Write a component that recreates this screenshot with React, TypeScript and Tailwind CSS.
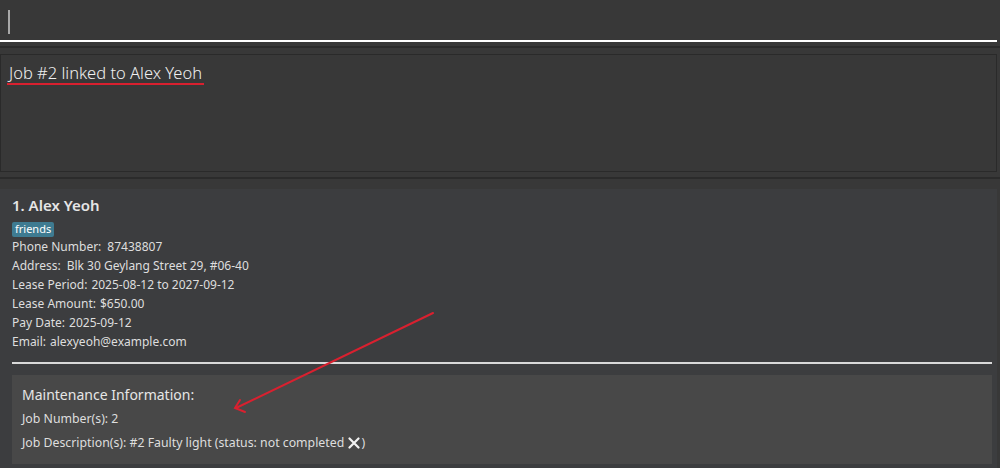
import React from "react";

const font = { fontFamily: '"Noto Sans", "Open Sans", sans-serif' };

function Row({ label, value, gap }: { label: string; value: string; gap?: boolean }) {
  return (
    <div className="flex h-[19px] items-center text-[12px] text-[#dedede]">
      <span>{label}</span>
      <span className={gap ? "ml-[6px]" : "ml-[4px]"}>{value}</span>
    </div>
  );
}

export default function App() {
  return (
    <div className="relative h-[468px] w-[1000px] overflow-hidden bg-[#383838]" style={font}>
      {/* command box */}
      <div className="mr-[3px] flex h-[42px] items-start border-b-2 border-white pl-[8px] pt-[10px]">
        <div className="h-[24px] w-[2px] bg-[#a8a8a8]" />
      </div>
      <div className="mt-[4px] h-[2px] bg-[#2b2b2b]" />

      {/* result display */}
      <div className="mr-[3px] mt-[6px] h-[118px] border border-[#2a2a2a] bg-[#383838] pl-[6px] pt-[6px]">
        <div className="inline-block border-b-2 border-[#d9202f] px-[2px] text-[16.5px] font-light leading-[20px] text-[#f0f0f0]">
          Job #2 linked to Alex Yeoh
        </div>
      </div>
      <div className="mt-[5px] h-[2px] bg-[#2b2b2b]" />

      {/* person list */}
      <div className="mr-[3px] mt-[10px] h-[300px] bg-[#3c3d3f] px-[12px] pt-[6px]">
        <div className="text-[15px] font-semibold leading-[20px] text-[#e6e6e6]">1. Alex Yeoh</div>
        <div className="mt-[4px] inline-flex h-[15px] items-center rounded-[2px] bg-[#3e7b91] px-[3px] text-[11px] text-white">
          friends
        </div>
        <div className="-mt-[2px]">
          <Row label="Phone Number:" value="87438807" gap />
          <Row label="Address:" value="Blk 30 Geylang Street 29, #06-40" gap />
          <Row label="Lease Period:" value="2025-08-12 to 2027-09-12" />
          <Row label="Lease Amount:" value="$650.00" />
          <Row label="Pay Date:" value="2025-09-12" />
          <Row label="Email:" value="alexyeoh@example.com" />
        </div>
        <div className="mr-[-7px] mt-[11px] h-[2px] bg-[#d9d9d9]" />
        <div className="mr-[-7px] mt-[11px] h-[89px] bg-[#484848] px-[10px] pt-[10px]">
          <div className="text-[14px] leading-[20px] text-[#e6e6e6]">Maintenance Information:</div>
          <div className="mt-[5px] text-[12.3px] leading-[18px] text-[#dedede]">Job Number(s): 2</div>
          <div className="mt-[6px] flex items-center text-[12.3px] leading-[18px] text-[#dedede]">
            <span>Job Description(s): #2 Faulty light (status: not completed&nbsp;</span>
            <svg width="12" height="12" viewBox="0 0 12 12" className="mx-[1px]">
              <path d="M1.5 1.5 L10.5 10.5 M10.5 1.5 L1.5 10.5" stroke="#f2f2f2" strokeWidth="2.2" strokeLinecap="round" />
            </svg>
            <span>)</span>
          </div>
        </div>
      </div>

      {/* annotation arrow */}
      <svg className="pointer-events-none absolute left-0 top-0" width="1000" height="468">
        <g stroke="#d9202f" strokeWidth="2" strokeLinecap="round" fill="none">
          <line x1="433" y1="313" x2="236" y2="408" />
          <polyline points="240,400 235,408 245,412" />
        </g>
      </svg>
    </div>
  );
}
